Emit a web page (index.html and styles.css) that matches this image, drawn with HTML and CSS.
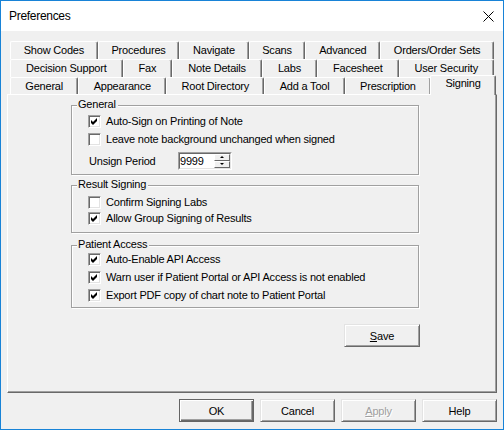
FILE: index.html
```html
<!DOCTYPE html>
<html>
<head>
<meta charset="utf-8">
<title>Preferences</title>
<link rel="stylesheet" href="styles.css">
</head>
<body>
<div class="window">
  <div class="titlebar">
    <span class="title">Preferences</span>
    <svg class="close" viewBox="0 0 11 11"><path d="M0.5 0.5 L10.5 10.5 M10.5 0.5 L0.5 10.5" stroke="#000" stroke-width="1" fill="none"/></svg>
  </div>
  <div class="client">
    <div class="tabs">
      <div class="tab-row">
        <div class="tab">Show Codes</div>
        <div class="tab">Procedures</div>
        <div class="tab">Navigate</div>
        <div class="tab">Scans</div>
        <div class="tab">Advanced</div>
        <div class="tab">Orders/Order Sets</div>
      </div>
      <div class="tab-row">
        <div class="tab">Decision Support</div>
        <div class="tab">Fax</div>
        <div class="tab">Note Details</div>
        <div class="tab">Labs</div>
        <div class="tab">Facesheet</div>
        <div class="tab">User Security</div>
      </div>
      <div class="tab-row front">
        <div class="tab">General</div>
        <div class="tab">Appearance</div>
        <div class="tab">Root Directory</div>
        <div class="tab">Add a Tool</div>
        <div class="tab">Prescription</div>
        <div class="tab selected">Signing</div>
      </div>
    </div>
    <div class="panel">
      <div class="group g-general">
        <div class="group-title">General</div>
        <div class="check-row"><span class="cb"><svg viewBox="0 0 11 11"><polygon points="2,4 4,6 8,2 8,5 4,9 2,7" fill="#000"/></svg></span>Auto-Sign on Printing of Note</div>
        <div class="check-row"><span class="cb"></span>Leave note background unchanged when signed</div>
        <div class="spin-row">
          <span class="spin-label">Unsign Period</span>
          <div class="spin">
            <div class="spin-in">
              <span class="spin-val">9999</span>
              <div class="spin-btns">
                <div class="spin-btn"><span class="arr-up"></span></div>
                <div class="spin-btn"><span class="arr-down"></span></div>
              </div>
            </div>
          </div>
        </div>
      </div>
      <div class="group g-result">
        <div class="group-title">Result Signing</div>
        <div class="check-row"><span class="cb"></span>Confirm Signing Labs</div>
        <div class="check-row"><span class="cb"><svg viewBox="0 0 11 11"><polygon points="2,4 4,6 8,2 8,5 4,9 2,7" fill="#000"/></svg></span>Allow Group Signing of Results</div>
      </div>
      <div class="group g-patient">
        <div class="group-title">Patient Access</div>
        <div class="check-row"><span class="cb"><svg viewBox="0 0 11 11"><polygon points="2,4 4,6 8,2 8,5 4,9 2,7" fill="#000"/></svg></span>Auto-Enable API Access</div>
        <div class="check-row"><span class="cb"><svg viewBox="0 0 11 11"><polygon points="2,4 4,6 8,2 8,5 4,9 2,7" fill="#000"/></svg></span>Warn user if Patient Portal or API Access is not enabled</div>
        <div class="check-row"><span class="cb"><svg viewBox="0 0 11 11"><polygon points="2,4 4,6 8,2 8,5 4,9 2,7" fill="#000"/></svg></span>Export PDF copy of chart note to Patient Portal</div>
      </div>
      <div class="save-row">
        <div class="btn save"><u>S</u>ave</div>
      </div>
    </div>
    <div class="buttons">
      <div class="btn default">OK</div>
      <div class="btn">Cancel</div>
      <div class="btn disabled"><u>A</u>pply</div>
      <div class="btn">Help</div>
    </div>
  </div>
</div>
</body>
</html>
```
FILE: styles.css
```css
* { box-sizing: border-box; }
html, body { margin: 0; padding: 0; }
body {
  font-family: "Liberation Sans", Arial, sans-serif;
  font-size: 11px;
  color: #000;
  background: #fff;
}
.window {
  width: 504px;
  height: 430px;
  border: 1px solid #1883d7;
  background: #f0f0f0;
  display: flex;
  flex-direction: column;
}
.titlebar {
  height: 30px;
  flex: none;
  background: #fff;
  display: flex;
  align-items: center;
  padding-left: 8px;
}
.title { font-size: 12px; letter-spacing: -0.3px; }
.close { margin-left: auto; margin-right: 9px; width: 11px; height: 11px; }
.client { padding: 10px 0 0 6px; }
.tabs { margin: 0 3px; width: 484px; }
.tab-row { display: flex; height: 18px; }
.tab-row.front { height: 17px; }
.tab {
  flex: 1 1 auto;
  min-width: 47px;
  padding: 0 6px;
  border-top: 1px solid #fff;
  border-left: 1px solid #fff;
  border-right: 1px solid #696969;
  box-shadow: inset -1px 0 #a0a0a0;
  border-radius: 2px 2px 0 0;
  background: #f0f0f0;
  display: flex;
  justify-content: center;
  align-items: center;
  white-space: nowrap;
  letter-spacing: -0.2px;
  line-height: 13px;
}
.tab.selected {
  margin: -2px -2px -1px -1px;
  position: relative;
  z-index: 1;
  align-items: flex-start;
  padding-top: 1px;
}
.panel {
  width: 490px;
  height: 299px;
  border-top: 1px solid #fff;
  border-left: 1px solid #fff;
  border-right: 1px solid #696969;
  border-bottom: 1px solid #696969;
  box-shadow: inset -1px -1px #a0a0a0;
  padding: 10px 0 0 63px;
}
.group {
  position: relative;
  width: 348px;
  border: 1px solid #a0a0a0;
  box-shadow: inset 1px 1px #fff, 1px 1px #fff;
  padding-left: 16px;
}
.g-general { height: 70px; padding-top: 6px; }
.g-result { height: 48px; padding-top: 8px; margin-top: 10px; }
.g-patient { height: 63px; padding-top: 4px; margin-top: 12px; }
.group-title {
  position: absolute;
  top: -8px;
  left: 5px;
  padding: 0 2px 0 1px;
  background: #f0f0f0;
  line-height: 13px;
  letter-spacing: -0.2px;
}
.check-row {
  display: flex;
  align-items: center;
  gap: 5px;
  height: 18px;
  letter-spacing: -0.2px;
  white-space: nowrap;
}
.g-result .check-row { height: 16px; }
.cb {
  width: 13px;
  height: 13px;
  flex: none;
  background: #fff;
  border: 1px solid;
  border-color: #a0a0a0 #fff #fff #a0a0a0;
  box-shadow: inset 1px 1px #696969, inset -1px -1px #e3e3e3;
  display: flex;
}
.cb svg { width: 11px; height: 11px; }
.spin-row {
  display: flex;
  align-items: center;
  height: 19px;
  margin-top: 3px;
  padding-left: 1px;
  letter-spacing: -0.2px;
}
.spin-label { width: 89px; }
.spin {
  width: 54px;
  height: 18px;
  border: 1px solid;
  border-color: #a0a0a0 #fff #fff #a0a0a0;
}
.spin-in {
  height: 100%;
  display: flex;
  border: 1px solid;
  border-color: #696969 #e3e3e3 #e3e3e3 #696969;
  background: #fff;
}
.spin-val { flex: 1; line-height: 14px; padding-left: 0; }
.spin-btns { width: 16px; display: flex; flex-direction: column; }
.spin-btn {
  flex: 1;
  background: #f0f0f0;
  border: 1px solid;
  border-color: #fff #696969 #696969 #fff;
  display: flex;
  align-items: center;
  justify-content: center;
}
.arr-up {
  width: 0; height: 0;
  border-left: 2px solid transparent;
  border-right: 2px solid transparent;
  border-bottom: 2px solid #000;
}
.arr-down {
  width: 0; height: 0;
  border-left: 2px solid transparent;
  border-right: 2px solid transparent;
  border-top: 2px solid #000;
}
.save-row {
  display: flex;
  justify-content: flex-end;
  width: 349px;
  margin-top: 16px;
}
.btn {
  width: 75px;
  height: 23px;
  border: 1px solid;
  border-color: #e3e3e3 #696969 #696969 #e3e3e3;
  box-shadow: inset 1px 1px #fff, inset -1px -1px #a0a0a0;
  background: #f0f0f0;
  display: flex;
  align-items: center;
  justify-content: center;
  letter-spacing: -0.2px;
}
.btn.save { width: 76px; }
.btn.default {
  border-color: #646464;
  box-shadow: inset 1px 1px #fff, inset -1px -1px #696969, inset -2px -2px #a0a0a0;
}
.btn.disabled { color: #a0a0a0; text-shadow: 1px 1px 0 #fff; }
.buttons {
  display: flex;
  justify-content: flex-end;
  gap: 6px;
  width: 490px;
  margin-top: 6px;
}
```
